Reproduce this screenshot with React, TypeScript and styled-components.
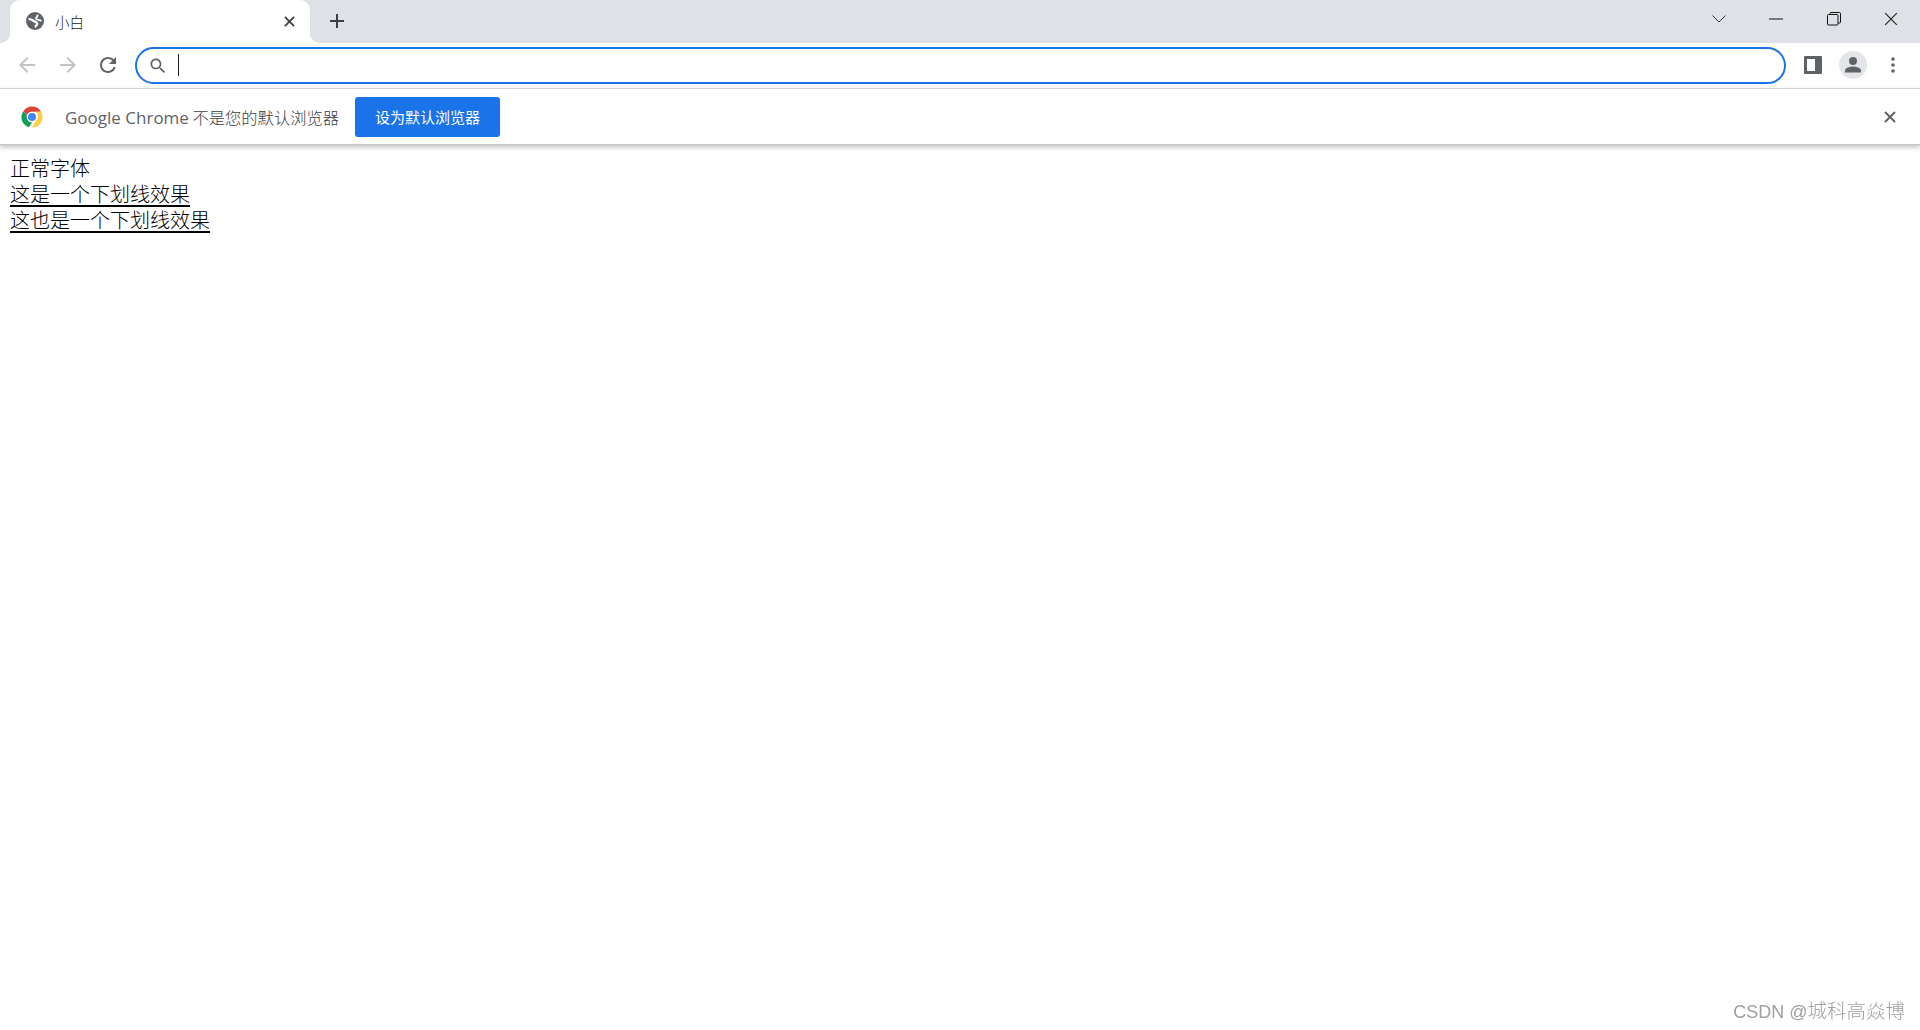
import React from "react";
import styled, { createGlobalStyle } from "styled-components";

const GlobalStyle = createGlobalStyle`
  html, body {
    margin: 0;
    padding: 0;
    background: #fff;
    overflow: hidden;
  }
  #root {
    height: 1030px;
  }
`;

const UI_FONT = `"Open Sans", "Noto Sans CJK SC", sans-serif`;
const CJK_FONT = `"Noto Sans CJK SC", "Liberation Sans", sans-serif`;

const Chrome = () => (
  <svg width="22" height="22" viewBox="0 0 22 22">
    <circle cx="11" cy="11" r="10.5" fill="#fff" />
    <path d="M11 .5a10.5 10.5 0 0 1 9.1 5.25H11a5.25 5.25 0 0 0-5 3.6L2.3 5.2A10.5 10.5 0 0 1 11 .5z" fill="#db4437" />
    <path d="M2.3 5.2 6 9.35a5.25 5.25 0 0 0 5 6.9l-3 5A10.5 10.5 0 0 1 2.3 5.2z" fill="#0f9d58" />
    <path d="M20.1 5.75A10.5 10.5 0 0 1 11 21.5l3.9-7a5.25 5.25 0 0 0-.4-8.75z" fill="#ffcd40" />
    <circle cx="11" cy="11" r="5.2" fill="#fff" />
    <circle cx="11" cy="11" r="4" fill="#4285f4" />
  </svg>
);

const Globe = () => (
  <svg width="20" height="20" viewBox="0 0 20 20">
    <circle cx="10" cy="10" r="9" fill="#5f6368" />
    <path d="M3.5 8.200C6.500 7.500 8 10 10.500 10.800 13 11.700 12.500 14.500 9.800 15.800" fill="none" stroke="#fff" strokeWidth="2.400" />
    <path d="M12.600 3.600C13 6 10.500 6.300 11.200 7.800 12 9 14.500 8.500 16.400 10" fill="none" stroke="#fff" strokeWidth="1.800" />
  </svg>
);

const Back = () => (
  <svg width="24" height="24" viewBox="0 0 24 24" fill="#c1c3c6">
    <path d="M20 11H7.83l5.59-5.59L12 4l-8 8 8 8 1.41-1.41L7.83 13H20v-2z" />
  </svg>
);

const Forward = () => (
  <svg width="24" height="24" viewBox="0 0 24 24" fill="#c1c3c6">
    <path d="M4 11h12.17l-5.59-5.59L12 4l8 8-8 8-1.41-1.41L16.170 13H4v-2z" />
  </svg>
);

const Reload = () => (
  <svg width="24" height="24" viewBox="0 0 24 24" fill="#5f6368">
    <path d="M17.65 6.35C16.2 4.9 14.21 4 12 4c-4.42 0-7.99 3.58-7.99 8s3.57 8 7.99 8c3.73 0 6.84-2.55 7.73-6h-2.08c-.82 2.33-3.04 4-5.65 4-3.31 0-6-2.69-6-6s2.69-6 6-6c1.66 0 3.14.69 4.22 1.78L13 11h7V4l-2.35 2.35z" />
  </svg>
);

const Search = () => (
  <svg width="20" height="20" viewBox="0 0 24 24" fill="#5f6368">
    <path d="M15.5 14h-.79l-.28-.27C15.41 12.59 16 11.11 16 9.5 16 5.91 13.09 3 9.5 3S3 5.91 3 9.5 5.91 16 9.5 16c1.61 0 3.09-.59 4.23-1.57l.27.28v.79l5 4.99L20.49 19l-4.99-5zm-6 0C7.01 14 5 11.99 5 9.5S7.01 5 9.5 5 14 7.01 14 9.5 11.99 14 9.5 14z" />
  </svg>
);

const Cross = ({ size, color, weight }: { size: number; color: string; weight: number }) => (
  <svg width={size} height={size} viewBox="0 0 12 12" stroke={color} strokeWidth={weight} fill="none">
    <path d="M1 1l10 10M11 1L1 11" />
  </svg>
);

const Plus = () => (
  <svg width="16" height="16" viewBox="0 0 16 16" stroke="#3c4043" strokeWidth="2" fill="none">
    <path d="M8 1v14M1 8h14" />
  </svg>
);

const Chevron = () => (
  <svg width="14" height="8" viewBox="0 0 14 8" stroke="#333" strokeWidth="1" fill="none">
    <path d="M.5.5 7 7 13.500.5" />
  </svg>
);

const Minimize = () => (
  <svg width="14" height="2" viewBox="0 0 14 2" stroke="#111" strokeWidth="1" fill="none">
    <path d="M0 1h14" />
  </svg>
);

const Restore = () => (
  <svg width="14" height="14" viewBox="0 0 14 14" stroke="#111" strokeWidth="1" fill="none">
    <rect x=".5" y="2.500" width="10.500" height="10.500" rx="1" />
    <path d="M3 2.500V1.500a1 1 0 0 1 1-1h8.500a1 1 0 0 1 1 1V10a1 1 0 0 1-1 1h-1.500" />
  </svg>
);

const SidePanel = () => (
  <svg width="18" height="18" viewBox="0 0 18 18">
    <rect width="18" height="18" rx="1" fill="#5f6368" />
    <rect x="3" y="3" width="8" height="12" fill="#fff" />
  </svg>
);

const Person = () => (
  <svg width="18" height="18" viewBox="0 0 18 18" fill="#5f6368">
    <circle cx="9" cy="5" r="4" />
    <path d="M1 16.500v-2c0-2.700 5.300-4 8-4s8 1.300 8 4v2z" />
  </svg>
);

const Dots = () => (
  <svg width="4" height="16" viewBox="0 0 4 16" fill="#5f6368">
    <circle cx="2" cy="2" r="1.800" />
    <circle cx="2" cy="8" r="1.800" />
    <circle cx="2" cy="14" r="1.800" />
  </svg>
);

const App = () => {
  return (
    <Page>
      <GlobalStyle />
      <TabStrip>
        <Tab>
          <Globe />
          <TabTitle>小白</TabTitle>
          <TabClose>
            <Cross size={11} color="#3c4043" weight={2} />
          </TabClose>
        </Tab>
        <NewTab>
          <Plus />
        </NewTab>
        <WindowControls>
          <WindowButton><Chevron /></WindowButton>
          <WindowButton><Minimize /></WindowButton>
          <WindowButton><Restore /></WindowButton>
          <WindowButton><Cross size={14} color="#222" weight={1} /></WindowButton>
        </WindowControls>
      </TabStrip>
      <Toolbar>
        <NavButton><Back /></NavButton>
        <NavButton><Forward /></NavButton>
        <NavButton><Reload /></NavButton>
        <Omnibox>
          <Search />
          <Caret />
        </Omnibox>
        <ToolButton><SidePanel /></ToolButton>
        <ToolButton>
          <Avatar><Person /></Avatar>
        </ToolButton>
        <ToolButton><Dots /></ToolButton>
      </Toolbar>
      <InfoBar>
        <Chrome />
        <InfoText><Brand>Google Chrome</Brand> 不是您的默认浏览器</InfoText>
        <PrimaryButton>设为默认浏览器</PrimaryButton>
        <InfoClose>
          <Cross size={12} color="#5f6368" weight={2} />
        </InfoClose>
      </InfoBar>
      <Content>
        <div>正常字体</div>
        <Underlined>这是一个下划线效果</Underlined>
        <Underlined>这也是一个下划线效果</Underlined>
      </Content>
      <Watermark><WatermarkLatin>CSDN @</WatermarkLatin>城科高焱博</Watermark>
    </Page>
  );
};

export default App;

const Page = styled.div`
  position: relative;
  height: 1030px;
  display: flex;
  flex-direction: column;
  background: #fff;
`;

const TabStrip = styled.div`
  height: 43px;
  display: flex;
  align-items: stretch;
  padding-left: 10px;
  background: #dee1e6;
`;

const Tab = styled.div`
  position: relative;
  width: 300px;
  display: flex;
  align-items: center;
  box-sizing: border-box;
  padding: 0 0 1px 15px;
  background: #fff;
  border-radius: 10px 10px 0 0;

  &::before,
  &::after {
    content: "";
    position: absolute;
    bottom: 0;
    width: 10px;
    height: 10px;
  }
  &::before {
    left: -10px;
    background: radial-gradient(circle at 0 0, #dee1e6 9.5px, #fff 10.5px);
  }
  &::after {
    right: -10px;
    background: radial-gradient(circle at 100% 0, #dee1e6 9.5px, #fff 10.5px);
  }
`;

const TabTitle = styled.span`
  margin-left: 10px;
  font: 300 14.500px ${CJK_FONT};
  color: #202124;
`;

const TabClose = styled.span`
  display: flex;
  margin-left: auto;
  margin-right: 15px;
`;

const NewTab = styled.div`
  width: 24px;
  margin-left: 15px;
  padding-bottom: 1px;
  display: flex;
  align-items: center;
  justify-content: center;
`;

const WindowControls = styled.div`
  margin-left: auto;
  display: flex;
  height: 38px;
`;

const WindowButton = styled.div`
  width: 57.500px;
  display: flex;
  align-items: center;
  justify-content: center;
`;

const Toolbar = styled.div`
  height: 37px;
  display: flex;
  align-items: flex-start;
  padding: 4px 7px 4px 7px;
  border-bottom: 1px solid #dadce0;
`;

const ToolButton = styled.div`
  width: 40px;
  height: 36px;
  flex: none;
  display: flex;
  align-items: center;
  justify-content: center;
`;

const NavButton = styled(ToolButton)`
  width: 40.500px;
`;

const Omnibox = styled.div`
  flex: 1;
  height: 37px;
  box-sizing: border-box;
  margin: 0 7px 0 6.500px;
  padding-left: 11px;
  display: flex;
  align-items: center;
  border: 2px solid #1a73e8;
  border-radius: 19px;
`;

const Caret = styled.span`
  width: 1px;
  height: 22px;
  margin: 0 0 1px 10px;
  background: #202124;
`;

const Avatar = styled.div`
  width: 28px;
  height: 28px;
  display: flex;
  align-items: center;
  justify-content: center;
  border-radius: 50%;
  background: #e3e5e9;
`;

const InfoBar = styled.div`
  position: relative;
  height: 55px;
  display: flex;
  align-items: center;
  padding-left: 21px;
  border-bottom: 1px solid #c4c6c9;
  box-shadow: 0 2px 5px rgba(60, 64, 67, 0.35);
`;

const InfoText = styled.span`
  margin-left: 22px;
  font: 300 16.300px ${CJK_FONT};
  color: #3c4043;
  white-space: nowrap;
`;

const Brand = styled.span`
  font: 17px ${UI_FONT};
  color: #5f6368;
`;

const PrimaryButton = styled.div`
  width: 145px;
  height: 40px;
  margin-left: 16px;
  display: flex;
  align-items: center;
  justify-content: center;
  border-radius: 3px;
  background: #1a73e8;
  color: #fff;
  font: 15px ${CJK_FONT};
`;

const InfoClose = styled.span`
  display: flex;
  margin-left: auto;
  margin-right: 24px;
`;

const Content = styled.div`
  padding: 10px 0 0 10px;
  font: 300 20px/26px ${CJK_FONT};
  color: #000;
`;

const Underlined = styled.div`
  width: fit-content;
  text-decoration: underline;
  text-decoration-thickness: 2px;
  text-underline-offset: 3px;
`;

const Watermark = styled.div`
  position: absolute;
  right: 15px;
  bottom: 6px;
  font: 300 19.500px/28px "Noto Sans CJK SC", sans-serif;
  color: #a0a0a0;
  filter: blur(0.3px);
`;

const WatermarkLatin = styled.span`
  font: 18px "Liberation Sans", sans-serif;
`;
